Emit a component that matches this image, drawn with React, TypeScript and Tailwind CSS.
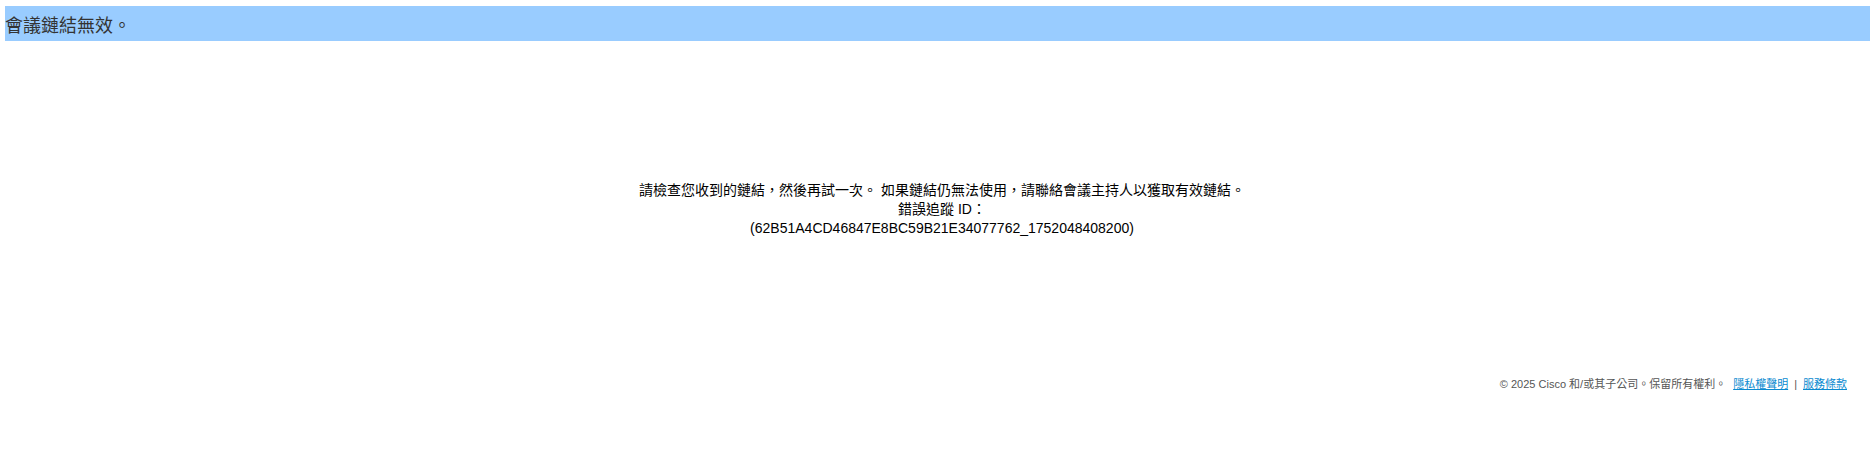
export default function App() {
  const font = { fontFamily: '"Liberation Sans", Arial, "Noto Sans CJK TC", sans-serif' };
  return (
    <div className="min-h-[459px] bg-white text-black" style={font}>
      {/* Header bar */}
      <div className="ml-[5px] mt-[6px] flex h-[35px] items-center bg-[#99ccff] pt-[5px]">
        <span className="text-[18px] text-[#333333]">會議鏈結無效。</span>
      </div>

      {/* Message */}
      <div className="mt-[140px] pl-[14px] text-center text-[14px] leading-[19px]">
        <div>請檢查您收到的鏈結，然後再試一次。 如果鏈結仍無法使用，請聯絡會議主持人以獲取有效鏈結。</div>
        <div>錯誤追蹤 ID：</div>
        <div>(62B51A4CD46847E8BC59B21E34077762_1752048408200)</div>
      </div>

      {/* Footer */}
      <div className="mt-[138px] flex justify-end pr-[23px] text-[11px] leading-[16px] text-[#555555]">
        <span>© 2025 Cisco 和/或其子公司。保留所有權利。</span>
        <a href="#" className="ml-[7px] text-[#0a8ad0] underline">隱私權聲明</a>
        <span className="mx-[6px]">|</span>
        <a href="#" className="text-[#0a8ad0] underline">服務條款</a>
      </div>
    </div>
  );
}
